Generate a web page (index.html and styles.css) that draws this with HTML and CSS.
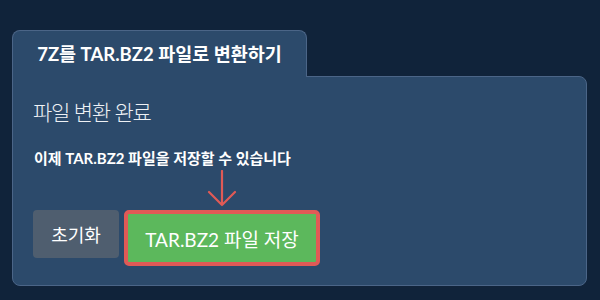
FILE: index.html
```html
<!DOCTYPE html>
<html lang="ko">

<head>
    <meta charset="UTF-8">
    <meta name="viewport" content="width=device-width, initial-scale=1.0">
    <title>7Z를 TAR.BZ2로</title>
    <link rel="stylesheet" href="styles.css">
</head>

<body>
    <div class="box">
        <div class="tab">7Z를 TAR.BZ2 파일로 변환하기</div>
        <div class="panel">
            <h2 class="title">파일 변환 완료</h2>
            <p class="desc">이제 TAR.BZ2 파일을 저장할 수 있습니다</p>
            <div class="actions">
                <button class="btn reset">초기화</button>
                <div class="save-wrap">
                    <svg class="arrow" width="30" height="38" viewBox="0 0 30 38">
                        <path d="M15 1 V35 M2 22 L15 35 L28 22" fill="none" stroke="#e05a56" stroke-width="2.2" stroke-linecap="round" stroke-linejoin="round" />
                    </svg>
                    <button class="btn save">TAR.BZ2 파일 저장</button>
                </div>
            </div>
        </div>
    </div>
</body>

</html>
```

FILE: styles.css
```css
body {
    margin: 0;
    padding: 0;
    box-sizing: border-box;
    background-color: #10233a;
    font-family: Lato, "Noto Sans CJK KR", sans-serif;
    color: #fff;
}

.box {
    padding: 30px 13px 0 12px;
}

.tab {
    width: 295px;
    height: 47px;
    line-height: 45px;
    box-sizing: border-box;
    text-align: center;
    font-size: 18.5px;
    font-weight: 700;
    background-color: #2c4a6b;
    border: 1px solid #4b6587;
    border-bottom: none;
    border-radius: 8px 8px 0 0;
    position: relative;
    z-index: 1;
    padding-top: 1px;
}

.panel {
    background-color: #2c4a6b;
    border: 1px solid #4b6587;
    border-radius: 0 8px 8px 8px;
    margin-top: -1px;
    height: 210px;
    box-sizing: border-box;
    padding: 20px 20px 0 20px;
}

.title {
    margin: 0;
    font-size: 21px;
    font-weight: 300;
    line-height: 30px;
    letter-spacing: -1.2px;
    color: #eef1f5;
}

.desc {
    margin: 21px 0 0 1px;
    font-size: 15px;
    font-weight: 700;
    line-height: 20px;
}

.actions {
    display: flex;
    align-items: flex-end;
    gap: 5px;
    margin-top: 2px;
}

.save-wrap {
    display: flex;
    flex-direction: column;
    align-items: center;
}

.arrow {
    display: block;
    margin-bottom: 2px;
}

.btn {
    font-family: Lato, "Noto Sans CJK KR", sans-serif;
    color: #fff;
    border: none;
    cursor: pointer;
    font-size: 18px;
}

.reset {
    width: 86px;
    height: 48px;
    background-color: #4f5e6f;
    border-radius: 4px;
    margin-bottom: 8px;
}

.save {
    width: 196px;
    height: 56px;
    background-color: #5cb85c;
    border: 4px solid #e05a56;
    border-radius: 5px;
    font-size: 19px;
}
```
